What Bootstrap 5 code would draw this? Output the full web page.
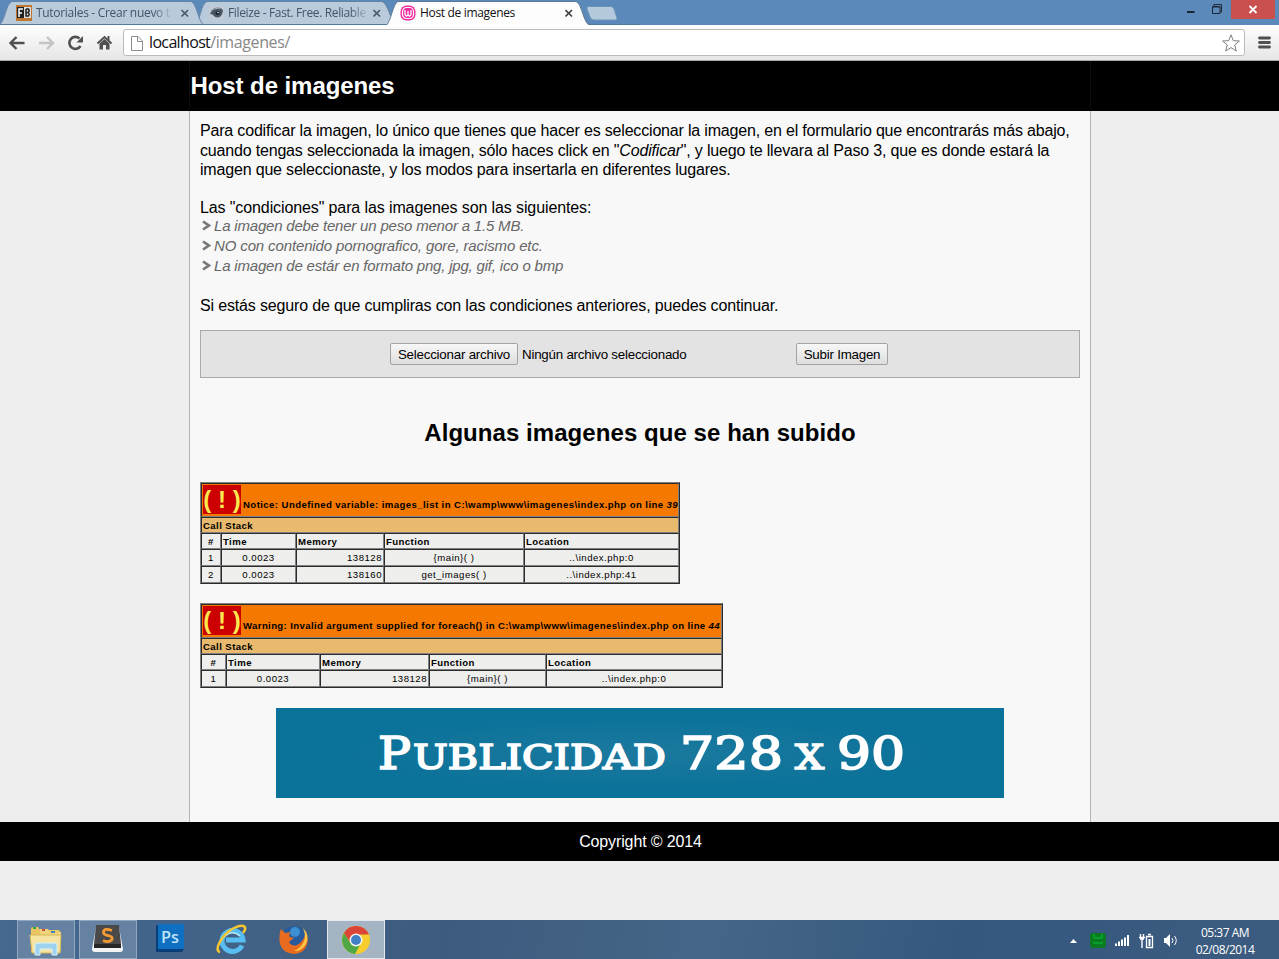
<!DOCTYPE html>
<html lang="es">
<head>
    <meta charset="UTF-8">
    <meta name="viewport" content="width=device-width, initial-scale=1.0">
    <title>Host de imagenes</title>
    <!-- Bootstrap CSS -->
    <link href="https://cdn.jsdelivr.net/npm/bootstrap@5.3.0/dist/css/bootstrap.min.css" rel="stylesheet">
    <!-- Custom CSS -->
    <style>
        body {
            height: 959px;
            overflow: hidden;
            background: #eee;
            color: #000;
            font-family: "Liberation Sans", Arial, sans-serif;
            font-size: 16px;
            line-height: 19px;
        }
        svg {
            display: block;
            flex: none;
        }
        /* Browser window */
        .tab-strip {
            height: 25px;
            background: #5b8aba;
            font: 12px/25px "Open Sans", "Noto Sans", sans-serif;
            color: #45536b;
        }
        .tab-shapes {
            position: absolute;
            left: 0;
            top: 0;
        }
        .tab-item {
            position: relative;
            height: 25px;
            white-space: nowrap;
        }
        .tab-one { width: 180px; margin-left: 16px; }
        .tab-two { width: 176px; margin-left: 13px; }
        .tab-three { width: 174px; margin-left: 15px; color: #111; }
        .tab-label {
            flex: 1;
            margin-left: 4px;
        }
        .tab-fade {
            -webkit-mask-image: linear-gradient(90deg, #000 88%, transparent 102%);
            mask-image: linear-gradient(90deg, #000 88%, transparent 102%);
            margin-right: 6px;
        }
        .tab-one .tab-label { letter-spacing: -.3px; }
        .tab-two .tab-label { letter-spacing: -.35px; }
        .tab-three .tab-label { letter-spacing: -.33px; }
        .window-close {
            width: 44px;
            height: 19px;
            background: #c9504f;
        }
        .toolbar {
            height: 36px;
            background: linear-gradient(#fefefe, #e6e6e6);
            border-bottom: 1px solid #aaa;
            padding: 4px 7px 4px 8px;
        }
        .address {
            width: 1122px;
            height: 27px;
            margin-left: 10px;
            background: #fff;
            border: 1px solid #bdbab8;
            border-radius: 3px;
            font: 16px/25px "Open Sans", "Noto Sans", sans-serif;
            letter-spacing: -.38px;
            color: #888;
        }
        .address b {
            font-weight: 400;
            letter-spacing: -.65px;
            color: #111;
        }
        /* Site */
        .site {
            height: 859px;
        }
        .site-head {
            height: 50px;
            background: #000;
            color: #fff;
        }
        .site-head h1 {
            width: 902px;
            height: 50px;
            margin: 0 0 0 189px;
            padding-left: .5px;
            border: solid #0d0d0d;
            border-width: 0 1px;
            font-size: 24px;
            font-weight: 700;
            line-height: 50px;
            letter-spacing: -.08px;
        }
        .site-body {
            width: 902px;
            height: 711px;
            margin-left: 189px;
            padding: 10px;
            background: #f8f8f8;
            border: solid #b5b5b5;
            border-width: 0 1px;
        }
        .intro-line { height: 19.5px; line-height: 20px; white-space: nowrap; letter-spacing: -.18px; }
        .rules-title { margin-top: 18px; letter-spacing: -.11px; }
        .continue-line { margin-top: 20px; letter-spacing: -.16px; }
        .rules {
            margin-top: -1px;
            color: #666;
            font-size: 15px;
            font-style: italic;
            line-height: 20px;
            letter-spacing: -.19px;
        }
        .rules li { height: 20px; padding-left: 2px; }
        .rules li:nth-child(2) { letter-spacing: -.13px; }
        .upload-box {
            height: 48px;
            margin-top: 14.5px;
            padding: 12px 0 0 189px;
            background: #e3e3e3;
            border: 1px solid #aaa;
            font-size: 13.33px;
            letter-spacing: -.22px;
        }
        .old-button {
            height: 22px;
            padding: 1px 0 0;
            border: 1px solid #a2a2a2;
            border-radius: 2px;
            background: linear-gradient(#f7f7f7, #dedede);
            color: #000;
            font-size: 13.33px;
            line-height: 20px;
            letter-spacing: -.22px;
        }
        .pick { width: 128px; }
        .send { width: 92px; }
        .file-name { width: 274px; margin-left: 4px; line-height: 23px; }
        .gallery-title {
            margin: 40px 0 0;
            font-size: 24px;
            font-weight: 700;
            line-height: 30px;
            letter-spacing: .06px;
        }
        .xdebug {
            table-layout: fixed;
            border-collapse: separate;
            border-spacing: 0;
            border: 1px solid;
            border-color: #808080 #2b2b2b #2b2b2b #808080;
            background: #eeeeec;
            font-size: 9.6px;
            line-height: 12px;
            white-space: nowrap;
        }
        .xdebug th, .xdebug td {
            padding: 2px 1px 0;
            border: 1px solid;
            border-color: #2b2b2b #808080 #808080 #2b2b2b;
            height: 16px;
            vertical-align: middle;
        }
        .xdebug td { height: 17px; padding-top: 1px; letter-spacing: .5px; }
        .xdebug .error-row th { height: 34px; padding-top: 1px; background: #f57900; vertical-align: top; }
        .xdebug .stack-row th { background: #e9b96e; }
        .xdebug th { letter-spacing: .42px; }
        .notice { width: 480px; margin-top: 34px; }
        .warning-table { width: 523px; margin-top: 19px; }
        .xdebug.warning-table .error-row th { letter-spacing: .37px; }
        .xdebug .bang {
            display: inline-block;
            width: 38px;
            height: 29px;
            margin-right: 2px;
            background: #c00;
            color: #fce94f;
            font-size: 24px;
            line-height: 29px;
            letter-spacing: 0;
            text-align: center;
        }
        .ad {
            width: 728px;
            height: 90px;
            margin: 20px auto 0;
            background: radial-gradient(ellipse at center, #1c799f, #0b7299 60%);
        }
        .site-foot {
            height: 39px;
            padding-left: 2px;
            background: #000;
            color: #fff;
            line-height: 39px;
            letter-spacing: -.13px;
        }
        /* Taskbar */
        .taskbar {
            height: 39px;
            padding-left: 17px;
            background: linear-gradient(100deg, #466990 0, #3d5b7e 35%, #456688 55%, #36587f 75%, #3c5b80 100%);
            font: 12px/17px "Open Sans", "Noto Sans", sans-serif;
            color: #fff;
        }
        .task {
            width: 58px;
            height: 39px;
            margin-right: 4px;
            border: 1px solid transparent;
        }
        .task-open { background: #6582a3; border-color: #91a6bf; }
        .task-active { background: #a5b4c3; border-color: #e3e9ef; }
        .clock { width: 74px; margin: 2px 17px 0 9px; letter-spacing: -.5px; }
    </style>
</head>
<body>
    <!-- Tabs -->
    <div class="tab-strip position-relative d-flex">
        <svg class="tab-shapes" width="640" height="25">
            <path d="M195 25 C200 22 201 3 207 1.500 H382 C388 3 391 22 396 25Z" fill="#b9cadb" stroke="#6584a5"/>
            <path d="M-1 25 C5 22 6 3 12 1.500 H191 C197 3 198 22 204 25Z" fill="#b9cadb" stroke="#6584a5"/>
            <path d="M0 24.500H640" stroke="#54779d"/>
            <path d="M386 25.500 C391 22 393 3 398 1.500 H576 C582 3 583 23 590 25.500Z" fill="#fdfdfd" stroke="#5d7894"/>
            <path d="M588 6.500 H611 Q613 6.500 614 9 L617 18 Q617.500 20 615 20 H594 Q591 20 590 17 L587 9 Q586.500 6.500 588 6.500Z" fill="#b4c9dc" stroke="#6e93b8"/>
        </svg>
        <div class="tab-item tab-one d-flex align-items-center">
            <svg width="16" height="16"><rect width="16" height="16" fill="#bd762f"/><rect x="1" y="2" width="7" height="11" fill="#222"/><rect x="8" y="2" width="7" height="11" fill="#ddd"/><path d="M3 12V4H7M3 8H6" stroke="#fff" stroke-width="1.500" fill="none"/><path d="M10 4V11H12.500Q14 9 12 7.500Q14 6 12.500 4H10M10 7.500H12" stroke="#222" stroke-width="1.500" fill="none"/></svg>
            <div class="tab-label tab-fade">Tutoriales - Crear nuevo t</div>
            <svg width="20" height="16"><path d="M5.500 5 L12 11.500 M12 5 L5.500 11.500" stroke="#4d5966" stroke-width="1.700"/></svg>
        </div>
        <div class="tab-item tab-two d-flex align-items-center">
            <svg width="15" height="16"><rect width="15" height="16" fill="#c1cbd7"/><path d="M1 9Q3 4 8 4Q12 3 14 5Q14 8 12 11Q8 14 5 11Q4 9 1 9Z" fill="#4a5563"/><circle cx="8.500" cy="8" r="2" fill="#17202b"/><circle cx="9" cy="7.500" r=".8" fill="#dfe6ee"/><path d="M2 6Q7 1 13 4" stroke="#7b8997" fill="none"/></svg>
            <div class="tab-label tab-fade">Fileize - Fast. Free. Reliable</div>
            <svg width="12" height="16"><path d="M0.500 5 L7 11.500 M7 5 L0.500 11.500" stroke="#4d5966" stroke-width="1.700"/></svg>
        </div>
        <div class="tab-item tab-three d-flex align-items-center">
            <svg width="16" height="16"><rect x=".5" y=".5" width="15" height="15" rx="6" fill="#ef2b9c"/><rect x="2.500" y="2.500" width="11" height="11" rx="4" fill="none" stroke="#fff" stroke-width="1.200"/><path d="M5 5V9Q5 11 6.500 11Q8 11 8 9V6M8 9Q8 11 9.500 11Q11 11 11 9V5" stroke="#fff" stroke-width="1.300" fill="none"/></svg>
            <div class="tab-label">Host de imagenes</div>
            <svg width="9" height="16"><path d="M0.500 5 L7 11.500 M7 5 L0.500 11.500" stroke="#444" stroke-width="1.700"/></svg>
        </div>
        <div class="d-flex ms-auto">
            <svg width="44" height="20"><path d="M-.5 12H7.500" stroke="#1d2733" stroke-width="2"/><path d="M25.500 6.500H33V13.500H25.500ZM27 6V4.500H34.500V12H33" fill="none" stroke="#1d2733"/><path d="M25 7H33" stroke="#1d2733"/></svg>
            <div class="window-close me-1 d-flex align-items-center justify-content-center"><svg width="10" height="9"><path d="M1.500 1L8.500 8M8.500 1L1.500 8" stroke="#fff" stroke-width="1.800"/></svg></div>
        </div>
    </div>
    <!-- Address bar -->
    <div class="toolbar d-flex align-items-center">
        <svg width="105" height="26">
            <path d="M16.500 13H3M8.500 7L2.500 13L8.500 19" fill="none" stroke="#505050" stroke-width="2.400"/>
            <path d="M31 13H45M39 7L45 13L39 19" fill="none" stroke="#c4c4c4" stroke-width="2.400"/>
            <path d="M72.500 16A6 6 0 1 1 71.500 8.500" fill="none" stroke="#505050" stroke-width="2.600"/><path d="M75 6V12.500H68.500Z" fill="#505050"/>
            <path d="M89.500 13.500L96.500 7L103.500 13.500" fill="none" stroke="#505050" stroke-width="2"/><path d="M91.500 13.500L96.500 9L101.500 13.500V19.500H98V15H95V19.500H91.500ZM99.500 6H101.500V10H99.500Z" fill="#505050"/>
        </svg>
        <div class="address d-flex align-items-center">
            <svg width="25" height="18"><path d="M7.500 2.500H14L18.500 7V16.500H7.500ZM13.500 2.500V7.500H18.500" fill="#fff" stroke="#8d8d8d"/></svg>
            <div><b>localhost</b>/imagenes/</div>
            <svg class="ms-auto me-1" width="18" height="18"><path d="M9 .8L11.300 6.700L17.400 7L12.700 10.900L14.300 17L9 13.600L3.700 17L5.300 10.900L.6 7L6.700 6.700Z" fill="#fff" stroke="#7c7c7c" stroke-linejoin="round"/></svg>
        </div>
        <svg class="ms-auto" width="15" height="15"><path d="M2.500 3H12.500M2.500 7.500H12.500M2.500 12H12.500" stroke="#505050" stroke-width="2.800" stroke-linecap="round"/></svg>
    </div>

    <div class="site">
        <header class="site-head d-flex">
            <h1>Host de imagenes</h1>
        </header>
        <main class="site-body">
            <div class="intro-line">Para codificar la imagen, lo único que tienes que hacer es seleccionar la imagen, en el formulario que encontrarás más abajo,</div>
            <div class="intro-line">cuando tengas seleccionada la imagen, sólo haces click en "<i>Codificar</i>", y luego te llevara al Paso 3, que es donde estará la</div>
            <div class="intro-line">imagen que seleccionaste, y los modos para insertarla en diferentes lugares.</div>
            <div class="intro-line rules-title">Las "condiciones" para las imagenes son las siguientes:</div>
            <ul class="rules list-unstyled mb-0">
                <li class="d-flex align-items-center"><svg width="12" height="12"><path d="M1 1.500L7 5.500L1 9.500M3 2.800L7 5.500L3 8.200" fill="none" stroke="#777" stroke-width="2.600"/></svg>La imagen debe tener un peso menor a 1.5 MB.</li>
                <li class="d-flex align-items-center"><svg width="12" height="12"><path d="M1 1.500L7 5.500L1 9.500M3 2.800L7 5.500L3 8.200" fill="none" stroke="#777" stroke-width="2.600"/></svg>NO con contenido pornografico, gore, racismo etc.</li>
                <li class="d-flex align-items-center"><svg width="12" height="12"><path d="M1 1.500L7 5.500L1 9.500M3 2.800L7 5.500L3 8.200" fill="none" stroke="#777" stroke-width="2.600"/></svg>La imagen de estár en formato png, jpg, gif, ico o bmp</li>
            </ul>
            <div class="intro-line continue-line">Si estás seguro de que cumpliras con las condiciones anteriores, puedes continuar.</div>
            <form class="upload-box d-flex">
                <button class="old-button pick" type="button">Seleccionar archivo</button>
                <span class="file-name">Ningún archivo seleccionado</span>
                <button class="old-button send" type="button">Subir Imagen</button>
            </form>
            <h2 class="gallery-title text-center">Algunas imagenes que se han subido</h2>

            <table class="xdebug notice">
                <colgroup><col width="20"><col width="75"><col width="88"><col width="140"><col></colgroup>
                <tr class="error-row"><th colspan="5"><span class="bang">( ! )</span>Notice: Undefined variable: images_list in C:\wamp\www\imagenes\index.php on line <i>39</i></th></tr>
                <tr class="stack-row"><th colspan="5">Call Stack</th></tr>
                <tr><th class="text-center">#</th><th>Time</th><th>Memory</th><th>Function</th><th>Location</th></tr>
                <tr class="text-center"><td>1</td><td>0.0023</td><td class="text-end">138128</td><td>{main}( )</td><td>..\index.php:0</td></tr>
                <tr class="text-center"><td>2</td><td>0.0023</td><td class="text-end">138160</td><td>get_images( )</td><td>..\index.php:41</td></tr>
            </table>
            <table class="xdebug warning-table">
                <colgroup><col width="25"><col width="94"><col width="109"><col width="117"><col></colgroup>
                <tr class="error-row"><th colspan="5"><span class="bang">( ! )</span>Warning: Invalid argument supplied for foreach() in C:\wamp\www\imagenes\index.php on line <i>44</i></th></tr>
                <tr class="stack-row"><th colspan="5">Call Stack</th></tr>
                <tr><th class="text-center">#</th><th>Time</th><th>Memory</th><th>Function</th><th>Location</th></tr>
                <tr class="text-center"><td>1</td><td>0.0023</td><td class="text-end">138128</td><td>{main}( )</td><td>..\index.php:0</td></tr>
            </table>

            <div class="ad">
                <svg width="728" height="90" font-family="DejaVu Serif, serif" fill="#fff" stroke="#fff" stroke-width="1.700">
                    <text x="102" y="60.500" font-size="44" textLength="33" lengthAdjust="spacingAndGlyphs">P</text>
                    <text x="137" y="60.500" font-size="34" textLength="253" lengthAdjust="spacingAndGlyphs">UBLICIDAD</text>
                    <text x="404" y="60.500" font-size="44" textLength="103" lengthAdjust="spacingAndGlyphs">728</text>
                    <text x="519" y="60.500" font-size="34" textLength="29" lengthAdjust="spacingAndGlyphs">X</text>
                    <text x="561" y="60.500" font-size="44" textLength="68" lengthAdjust="spacingAndGlyphs">90</text>
                </svg>
            </div>
        </main>
        <footer class="site-foot text-center">Copyright © 2014</footer>
    </div>

    <!-- Taskbar -->
    <div class="taskbar d-flex align-items-center">
        <div class="task task-open d-flex align-items-center justify-content-center">
            <svg width="34" height="32">
                <path d="M2 5Q2 3 4 3H9L11 6H29Q31 6 31 8V28H2Z" fill="#e9c663"/>
                <path d="M11 5H19L21 8H32V27H11Z" fill="#f0d47d"/><path d="M4 4H7" stroke="#35a747" stroke-width="2"/><path d="M13 6H16" stroke="#cf4b31" stroke-width="2"/><path d="M22 8H26" stroke="#3d87b9" stroke-width="2"/>
                <path d="M1 11H32L31 29H3Z" fill="#f7e3a0" stroke="#d6b65b"/>
                <path d="M6 31V21Q6 19 8 19H26Q28 19 28 21V31H23V25H11V31Z" fill="#9dd3ee" stroke="#d9f2fb"/>
            </svg>
        </div>
        <div class="task task-open d-flex align-items-center justify-content-center">
            <svg width="34" height="34"><path d="M5 4H28L32 26Q32 29 29 29H4Q1 29 1 26Z" fill="#f4f4f4"/><path d="M5 2H28L30 21Q30 24 27 24H6Q3 24 3 21Z" fill="#494949"/><path d="M3 21H30V25H3Z" fill="#262626"/><path d="M21 7.500Q13 4.500 12.500 9Q12.500 12 17 12.500Q22 13.500 21 16.500Q18 20 12 17.500" fill="none" stroke="#f49a32" stroke-width="2.800"/></svg>
        </div>
        <div class="task d-flex align-items-center justify-content-center">
            <svg width="32" height="32" class="mb-1"><path d="M2 4L5 2H30V27L28 30H2Z" fill="#073d78"/><rect x="4" y="2" width="26" height="25" fill="#0f6fc0"/><text x="7" y="21" font-family="Open Sans, sans-serif" font-size="17" font-weight="600" fill="#bfe4fa" textLength="18" lengthAdjust="spacingAndGlyphs">Ps</text></svg>
        </div>
        <div class="task d-flex align-items-center justify-content-center">
            <svg width="34" height="34"><path d="M27 22.500A10.500 10.500 0 1 1 28 17H11" fill="none" stroke="#58bdf0" stroke-width="5"/><path d="M9 14Q17 6 25 13" stroke="#b6e9fc" stroke-width="1.500" fill="none"/><path d="M5 29C-2 28 7 11 19 5C29 0 33 4 28 10" fill="none" stroke="#f5c62f" stroke-width="2.500"/></svg>
        </div>
        <div class="task d-flex align-items-center justify-content-center">
            <svg width="34" height="34"><circle cx="17" cy="16" r="13" fill="#265b9e"/><circle cx="18" cy="9" r="5" fill="#3c8fd0"/><path d="M4 6L8 10L14 9Q11 12 13 14L17 15L12 19Q15 24 20 22Q26 19 28 12L31 16Q30 30 17 31Q4 30 2.500 18Q2 10 4 6Z" fill="#e96b20"/><path d="M26 5Q33 12 29 21Q24 29 17 28Q26 24 28 15Q28 9 26 5Z" fill="#fac844"/></svg>
        </div>
        <div class="task task-active d-flex align-items-center justify-content-center">
            <svg width="30" height="30" viewBox="0 0 30 30"><circle cx="15" cy="15" r="14" fill="#f7cd2d"/><path d="M2.900 8A14 14 0 0 1 28 9.500H15A6 6 0 0 0 9.500 18Z" fill="#da4537"/><path d="M2.900 8A14 14 0 0 0 14 29L20 18A6 6 0 0 1 9.500 18Z" fill="#4fa845"/><circle cx="15" cy="15" r="6.500" fill="#f6f6f6"/><circle cx="15" cy="15" r="5" fill="#417fc6"/></svg>
        </div>
        <svg class="ms-auto" width="114" height="24">
            <path d="M5 15L8.500 11L12 15Z" fill="#fff"/>
            <rect x="25" y="5" width="16" height="15" rx="3" fill="#0b7b21"/><path d="M29 6V10H37V6M28 15H38" fill="none" stroke="#04ad2c" stroke-width="1.500"/>
            <path d="M51 18V15.500M54 18V13.500M57 18V11.500M60 18V9.500M63 18V7" stroke="#fff" stroke-width="2"/>
            <path d="M75.500 6V9M78.500 6V9M74 9.500H80M75 11H79M77 10V20" stroke="#fff" stroke-width="1.400" fill="none"/><path d="M81.500 8.500H87.500V19.500H81.500ZM83 6.500H86" fill="none" stroke="#fff" stroke-width="1.300"/><path d="M83.500 11H85.500V18H83.500Z" fill="#fff"/>
            <path d="M99 10H101L105 6V19L101 15H99Z" fill="#fff"/><path d="M107 10Q109 12.500 107 15M109.500 8Q113 12.500 109.500 17" stroke="#fff" fill="none"/>
        </svg>
        <div class="clock text-center">05:37 AM<br>02/08/2014</div>
    </div>
    <!-- Bootstrap JS -->
    <script src="https://cdn.jsdelivr.net/npm/bootstrap@5.3.0/dist/js/bootstrap.bundle.min.js"></script>
</body>
</html>
